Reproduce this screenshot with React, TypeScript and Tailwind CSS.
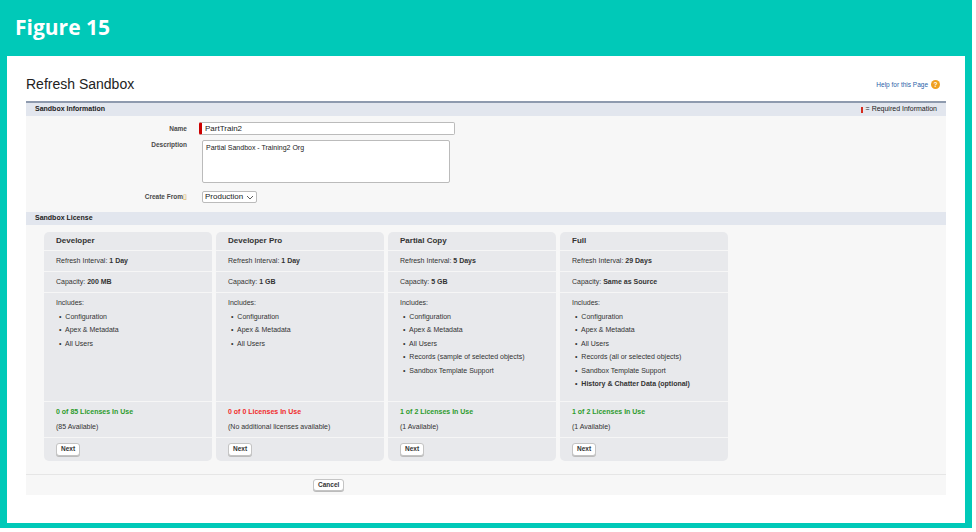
import React from "react";

type Card = {
  name: string;
  interval: string;
  capacity: string;
  items: string[];
  boldLast?: boolean;
  licenses: string;
  ok: boolean;
  note: string;
};

const cards: Card[] = [
  { name: "Developer", interval: "1 Day", capacity: "200 MB", items: ["Configuration", "Apex & Metadata", "All Users"], licenses: "0 of 85 Licenses In Use", ok: true, note: "(85 Available)" },
  { name: "Developer Pro", interval: "1 Day", capacity: "1 GB", items: ["Configuration", "Apex & Metadata", "All Users"], licenses: "0 of 0 Licenses In Use", ok: false, note: "(No additional licenses available)" },
  { name: "Partial Copy", interval: "5 Days", capacity: "5 GB", items: ["Configuration", "Apex & Metadata", "All Users", "Records (sample of selected objects)", "Sandbox Template Support"], licenses: "1 of 2 Licenses In Use", ok: true, note: "(1 Available)" },
  { name: "Full", interval: "29 Days", capacity: "Same as Source", items: ["Configuration", "Apex & Metadata", "All Users", "Records (all or selected objects)", "Sandbox Template Support", "History & Chatter Data (optional)"], boldLast: true, licenses: "1 of 2 Licenses In Use", ok: true, note: "(1 Available)" },
];

function SmallButton({ label }: { label: string }) {
  return (
    <button className="rounded-[3px] border border-[#c4c4c4] bg-white px-[4px] py-[2px] text-[6.5px] font-bold leading-none text-[#333] shadow-[0_1px_0_#bbb]">
      {label}
    </button>
  );
}

function LicenseCard({ c }: { c: Card }) {
  return (
    <div className="flex w-[168px] flex-col overflow-hidden rounded-[5px] bg-[#e8e9ec] text-[7px] text-[#333]">
      <div className="flex h-[19px] items-center border-b border-[#f6f6f6] px-[12px] text-[8px] font-bold">{c.name}</div>
      <div className="flex h-[21px] items-center border-b border-[#f6f6f6] px-[12px]">
        Refresh Interval:&nbsp; <b>{c.interval}</b>
      </div>
      <div className="flex h-[21px] items-center border-b border-[#f6f6f6] px-[12px]">
        Capacity:&nbsp; <b>{c.capacity}</b>
      </div>
      <div className="h-[109px] border-b border-[#f6f6f6] px-[12px] pt-[5px] leading-[9.5px]">
        <div className="mb-[4px]">Includes:</div>
        <ul className="flex flex-col gap-[4px] pl-[3px]">
          {c.items.map((it, i) => (
            <li key={it} className={c.boldLast && i === c.items.length - 1 ? "font-bold" : ""}>
              •&nbsp; {it}
            </li>
          ))}
        </ul>
      </div>
      <div className="flex h-[36px] flex-col justify-center gap-[5px] border-b border-[#f6f6f6] px-[12px]">
        <div className={`font-bold ${c.ok ? "text-[#2c9b2c]" : "text-[#f02b2b]"}`}>{c.licenses}</div>
        <div>{c.note}</div>
      </div>
      <div className="flex h-[23px] items-center px-[12px]">
        <SmallButton label="Next" />
      </div>
    </div>
  );
}

export default function App() {
  return (
    <div className="h-[532px] w-[976px] bg-white" style={{ fontFamily: "'Liberation Sans', Arial, sans-serif" }}>
      <div className="flex h-[528px] w-[972px] flex-col bg-[#00c9b8] px-[7px] pb-[5px]">
        <div className="flex h-[56px] items-center pl-[8px] text-[21px] font-bold text-white" style={{ fontFamily: "'Open Sans', 'DejaVu Sans', sans-serif" }}>
          Figure 15
        </div>
        <div className="flex-1 bg-white px-[19px] pt-[18px]">
          <div className="flex items-center justify-between pb-[6px]">
            <div className="text-[14px] text-[#222]">Refresh Sandbox</div>
            <div className="flex items-center gap-[3px] pr-[6px] text-[6.5px] text-[#2b5fa8]">
              Help for this Page
              <span className="flex h-[9px] w-[9px] items-center justify-center rounded-full bg-[#f0a020] text-[6.5px] font-bold text-white">?</span>
            </div>
          </div>
          <div className="border-t-2 border-[#8e9aae] bg-[#f7f7f7]">
            <div className="flex h-[13px] items-center justify-between bg-[#e2e6ee] px-[9px] text-[7px] font-bold text-[#222]">
              Sandbox Information
              <span className="flex items-center gap-[3px] font-normal">
                <span className="h-[6px] w-[2px] bg-[#d52b1e]" /> = Required Information
              </span>
            </div>
            <div className="flex flex-col gap-[5px] py-[6px] text-[6.5px]">
              <div className="flex items-center">
                <div className="w-[165px] pr-[4px] text-right font-bold text-[#4a4a4a]">Name</div>
                <div className="ml-[8px] flex h-[13px] w-[256px] items-center rounded-[2px] border border-[#bbb] border-l-[3px] border-l-[#c00] bg-white pl-[3px] text-[8px] text-[#222]">
                  PartTrain2
                </div>
              </div>
              <div className="flex items-start">
                <div className="w-[165px] pr-[4px] text-right font-bold text-[#4a4a4a]">Description</div>
                <div className="ml-[11px] h-[43px] w-[248px] rounded-[2px] border border-[#bbb] bg-white px-[3px] pt-[2px] text-[7px] text-[#222]">
                  Partial Sandbox - Training2 Org
                </div>
              </div>
              <div className="mt-[3px] flex items-center">
                <div className="w-[165px] pr-[4px] text-right font-bold text-[#4a4a4a]">Create From<span className="text-[#e0c080]">▯</span></div>
                <div className="ml-[11px] flex h-[12px] items-center gap-[3px] rounded-[2px] border border-[#bbb] bg-white px-[2px] text-[8px] text-[#222]">
                  Production
                  <svg width="8" height="5" viewBox="0 0 8 5"><path d="M1 1l3 3 3-3" fill="none" stroke="#333" strokeWidth="0.8" /></svg>
                </div>
              </div>
            </div>
            <div className="mt-[3px] flex h-[13px] items-center bg-[#e2e6ee] px-[9px] text-[7px] font-bold text-[#222]">Sandbox License</div>
            <div className="flex gap-[4px] pb-[13px] pl-[18px] pt-[7px]">
              {cards.map((c) => (
                <LicenseCard key={c.name} c={c} />
              ))}
            </div>
            <div className="flex h-[21px] items-center border-t border-[#e6e6e6] pl-[287px]">
              <SmallButton label="Cancel" />
            </div>
          </div>
        </div>
      </div>
    </div>
  );
}
